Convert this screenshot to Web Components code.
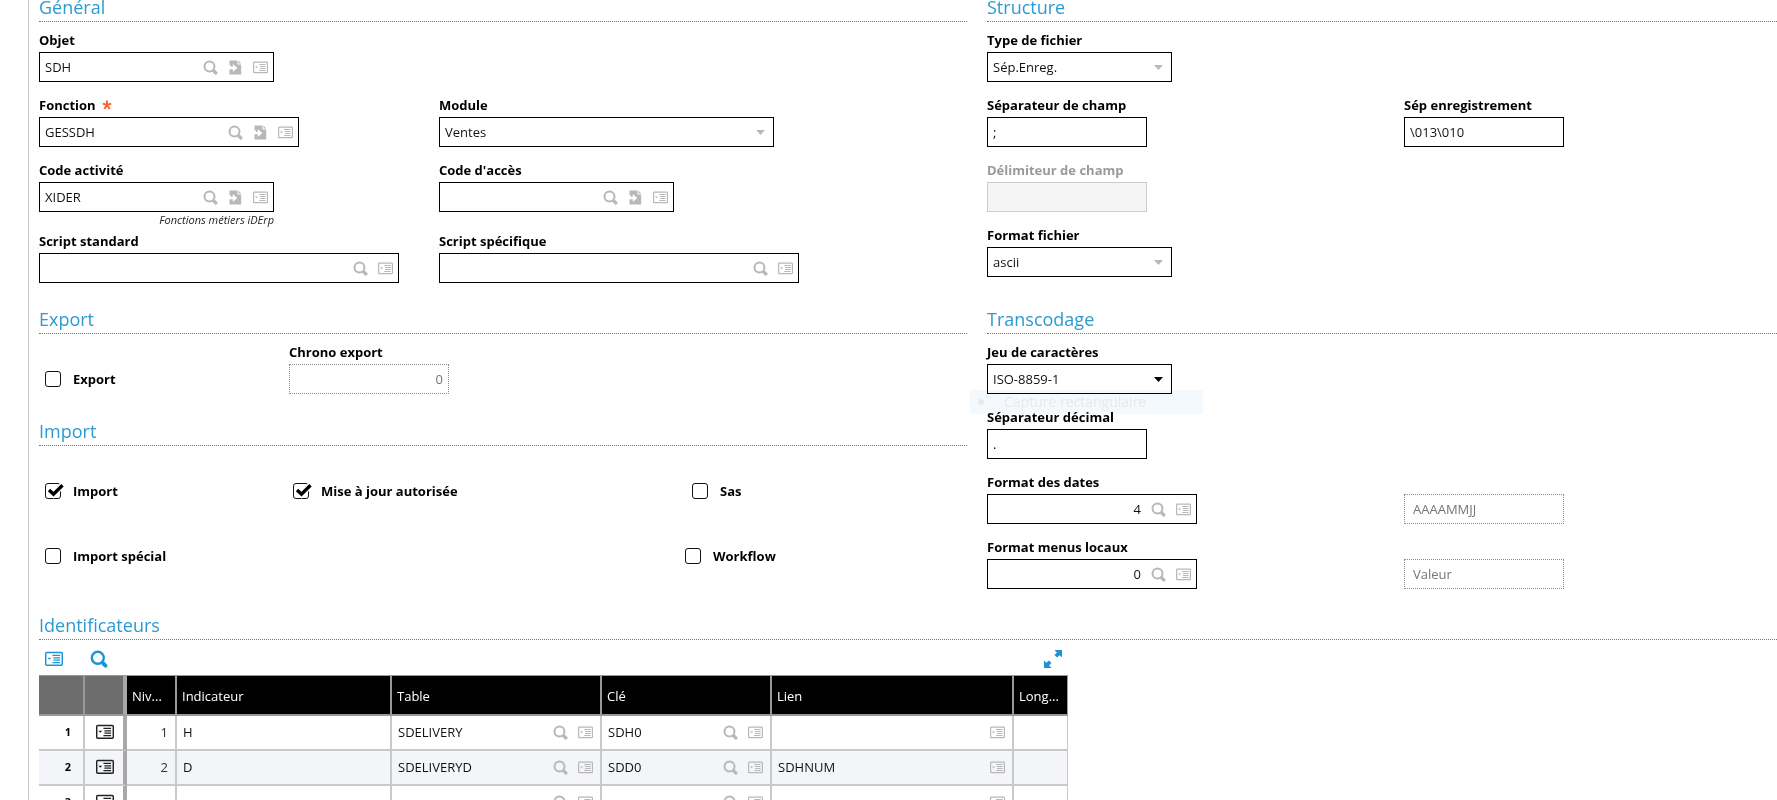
<!DOCTYPE html>
<html lang="fr">
<head>
<meta charset="utf-8">
<title>Modèles import/export</title>
<style>
  html, body { margin: 0; height: 100%; }
  body { background: #fff; color: #000; font: 13px/18px "Open Sans", "Noto Sans", sans-serif; overflow: hidden; }
  .columns { display: grid; grid-template-columns: minmax(0, 928fr) minmax(0, 790fr); gap: 29px 20px; }
  .stack { display: grid; gap: 30px; align-content: start; }
  .wide { grid-column: 1 / -1; }
  .pair { display: grid; grid-template-columns: 400fr 528fr; gap: 14px 0; align-items: start; }
  .pair.narrow { grid-template-columns: 417fr 373fr; align-items: end; }
  .export { display: grid; grid-template-columns: 250fr 678fr; }
  .rows { display: grid; gap: 14px; }
  .three { display: grid; grid-template-columns: 248fr 399fr 281fr; }
  .two { display: grid; grid-template-columns: 640fr 288fr; }
  .full { grid-column: 1 / -1; }
</style>
</head>
<body>
<x-page>
  <div class="columns">
    <x-section heading="Général">
      <div class="pair">
        <x-field class="full" label="Objet" value="SDH" size="235" icons="search jump list"></x-field>
        <x-field label="Fonction" required value="GESSDH" size="260" icons="search jump list"></x-field>
        <x-field label="Module" kind="select" value="Ventes" size="335"></x-field>
        <x-field label="Code activité" value="XIDER" size="235" icons="search jump list" hint="Fonctions métiers iDErp"></x-field>
        <x-field label="Code d'accès" size="235" icons="search jump list"></x-field>
        <x-field label="Script standard" size="360" icons="search list"></x-field>
        <x-field label="Script spécifique" size="360" icons="search list"></x-field>
      </div>
    </x-section>

    <x-section heading="Structure">
      <div class="pair narrow">
        <x-field class="full" label="Type de fichier" kind="select" value="Sép.Enreg." size="185"></x-field>
        <x-field label="Séparateur de champ" value=";" size="160"></x-field>
        <x-field label="Sép enregistrement" value="\013\010" size="160"></x-field>
        <x-field class="full" label="Délimiteur de champ" size="160" disabled></x-field>
        <x-field class="full" label="Format fichier" kind="select" value="ascii" size="185"></x-field>
      </div>
    </x-section>

    <div class="stack">
      <x-section heading="Export">
        <div class="export">
          <x-check label="Export"></x-check>
          <x-field label="Chrono export" value="0" size="160" numeric readonly></x-field>
        </div>
      </x-section>
      <x-section heading="Import">
        <div class="rows">
          <div class="three">
            <x-check label="Import" checked></x-check>
            <x-check label="Mise à jour autorisée" checked></x-check>
            <x-check label="Sas"></x-check>
          </div>
          <div class="two">
            <x-check label="Import spécial"></x-check>
            <x-check label="Workflow"></x-check>
          </div>
        </div>
      </x-section>
    </div>

    <x-section heading="Transcodage">
      <div class="pair narrow">
        <x-field class="full" label="Jeu de caractères" kind="select" value="ISO-8859-1" size="185" active></x-field>
        <x-field class="full" label="Séparateur décimal" value="." size="160"></x-field>
        <x-field label="Format des dates" value="4" size="210" numeric icons="search list"></x-field>
        <x-field name="Libellé du format des dates" value="AAAAMMJJ" size="160" readonly></x-field>
        <x-field label="Format menus locaux" value="0" size="210" numeric icons="search list"></x-field>
        <x-field name="Libellé du format des menus" value="Valeur" size="160" readonly></x-field>
      </div>
      <x-ghost slot="overlay">Capture rectangulaire</x-ghost>
    </x-section>

    <x-section class="wide" heading="Identificateurs">
      <x-grid></x-grid>
    </x-section>
  </div>
</x-page>

<script>
const define = (name, render) => customElements.define(name, class extends HTMLElement {
  connectedCallback() {
    if (this.shadowRoot) return;
    this.attachShadow({ mode: 'open' }).innerHTML = render(this);
  }
});

const SHAPES = {
  search: ['0 0 15 15', '<circle cx="6.5" cy="6.5" r="5" fill="none" stroke="currentColor" stroke-width="2"/><path d="M10.800 11L12.900 13" stroke="currentColor" stroke-width="3.200" stroke-linecap="round"/>'],
  jump: ['0 0 15 15', '<path fill="currentColor" fill-rule="evenodd" d="M1.500 .5H9.500V4.500H13.200V14.500H1.500V9.300H4.800V12L9.300 8L4.800 4V6.700H3V5.500H1.500Z"/><path fill="currentColor" d="M10.500 .5L13.200 3.500H10.500Z"/>'],
  list: ['0 0 15 15', '<rect x=".6" y="2.100" width="13.800" height="10.600" rx=".8" fill="none" stroke="currentColor" stroke-width="1.200"/><path fill="currentColor" d="M2 6.400H5.200L3.600 8.200Z"/><path d="M6.200 4.500H12.600M7 6.500H12.600M7 8.500H12.600M6.200 10.500H12.600" stroke="currentColor"/>'],
  expand: ['0 0 18 18', '<path fill="currentColor" d="M10.500 0H18V7.500L15.700 5.200L13 7.600L10.500 5L12.900 2.400ZM7.500 18H0V10.500L2.300 12.800L5 10.400L7.500 13L5.100 15.600Z"/>']
};
const NAMES = { search: 'Sélection', jump: 'Tunnel', list: 'Menu actions', expand: 'Plein écran' };

define('x-icon', el => {
  const [box, body] = SHAPES[el.getAttribute('shape')];
  return `<style>
    :host { display: block; width: var(--icon, 15px); height: var(--icon, 15px); }
    svg { display: block; width: 100%; height: 100%; }
  </style><svg viewBox="${box}" aria-hidden="true">${body}</svg>`;
});
const iconButton = shape => `<button type="button" aria-label="${NAMES[shape]}"><x-icon shape="${shape}"></x-icon></button>`;
const BUTTON = 'button { display: block; margin: 0; padding: 0; border: 0; background: none; color: inherit; cursor: pointer; }';

define('x-page', () => `<style>
  :host { display: block; box-sizing: border-box; height: 100%; margin-left: 28px; border-left: 1px solid #c8c8c8; padding-left: 10px; overflow: hidden; }
</style><main><slot></slot></main>`);

define('x-section', el => `<style>
  :host { display: block; position: relative; }
  h2 { margin: 0; padding-bottom: 7px; border-bottom: 1px dotted #1b93c0; color: #2c9ad2; font-weight: 400; font-size: 18px; line-height: 14px; }
  div { padding-top: 9px; }
</style><section><h2>${el.getAttribute('heading')}</h2><div><slot></slot></div><slot name="overlay"></slot></section>`);

define('x-field', el => {
  const get = n => el.getAttribute(n) || '', has = n => el.hasAttribute(n);
  const icons = get('icons').split(' ').filter(Boolean);
  const aria = get('name') ? `aria-label="${get('name')}"` : '';
  const control = get('kind') === 'select'
    ? `<select id="f"><option>${get('value')}</option></select><svg class="arrow" viewBox="0 0 9 5" aria-hidden="true"><path d="M0 0H9L4.500 5Z" fill="currentColor"/></svg>`
    : `<input id="f" type="text" ${aria} value="${get('value')}" ${has('disabled') ? 'disabled' : ''} ${has('readonly') ? 'readonly' : ''}>`;
  return `<style>
    :host { display: block; }
    label { display: flex; align-items: center; gap: 6px; height: 18px; margin-bottom: 3px; font-weight: 700; white-space: nowrap; }
    label svg { width: 10px; height: 10px; color: #ff6224; }
    .box { position: relative; box-sizing: border-box; display: flex; align-items: center; gap: 10px; width: ${get('size')}px; max-width: 100%; height: 30px; border: 1px solid #000; background: #fff; padding: 0 5px; color: #b8b8b8; }
    input, select { flex: 1; min-width: 0; width: 100%; box-sizing: border-box; height: 28px; margin: 0; padding: 0; border: 0; outline: 0; background: none; color: #111; font: inherit; appearance: none; }
    select { padding: 0 20px 0 0; }
    .arrow { position: absolute; right: 8px; width: 9px; height: 5px; pointer-events: none; }
    :host([active]) .box { color: #000; }
    :host([numeric]) input { text-align: right; }
    :host([readonly]) .box { border: 1px dotted #8c8c8c; }
    :host([readonly]) input { color: #757575; }
    :host([readonly]:not([numeric])) .box { padding: 0 8px; }
    :host([disabled]) label { color: #9a9a9a; }
    :host([disabled]) .box { border-color: #ccc; background: #f5f5f5; }
    p { width: ${get('size')}px; max-width: 100%; margin: 0 0 -10px; text-align: right; font-style: italic; font-size: 11px; line-height: 16px; color: #222; }
    ${BUTTON}
  </style>
  ${get('label') ? `<label for="f">${get('label')}${has('required') ? '<svg viewBox="0 0 10 10" aria-hidden="true"><path d="M5 5V.5M5 5L.8 3.600M5 5L9.200 3.600M5 5L2.300 9M5 5L7.700 9" stroke="currentColor" stroke-width="1.900"/></svg>' : ''}</label>` : ''}
  <div class="box">${control}${icons.map(iconButton).join('')}</div>
  ${get('hint') ? `<p>${get('hint')}</p>` : ''}`;
});

define('x-check', el => `<style>
  :host { display: flex; align-items: flex-end; min-height: 51px; }
  label { display: flex; align-items: center; gap: 12px; height: 30px; padding-left: 6px; font-weight: 700; white-space: nowrap; }
  .mark { position: relative; width: 16px; height: 16px; }
  input { display: block; box-sizing: border-box; width: 16px; height: 16px; margin: 0; appearance: none; border: 1px solid #111; border-radius: 3px; background: #fff; }
  svg { position: absolute; left: 0; top: 0; width: 19px; height: 16px; pointer-events: none; visibility: hidden; }
  input:checked + svg { visibility: visible; }
</style><label for="c"><span class="mark"><input id="c" type="checkbox" ${el.hasAttribute('checked') ? 'checked' : ''}><svg viewBox="0 0 19 16" aria-hidden="true"><path d="M4 7.500L8.500 11.500L17.500 2" fill="none" stroke="#fff" stroke-width="6"/><path d="M4 7L8.500 11.200L17.500 2.200" fill="none" stroke="#000" stroke-width="3.400"/></svg></span>${el.getAttribute('label')}</label>`);

define('x-ghost', () => `<style>
  :host { position: absolute; left: -17px; top: 78px; box-sizing: border-box; display: flex; align-items: center; width: 233px; height: 24px; padding-left: 8px; gap: 20px; background: #f4f9fe; color: #ebe8e6; font-size: 14px; white-space: nowrap; mix-blend-mode: multiply; pointer-events: none; }
  i { width: 6px; height: 6px; border-radius: 50%; background: #ece8de; }
</style><i></i><slot></slot>`);

define('x-grid', () => {
  const rows = [
    ['1', '1', 'H', 'SDELIVERY', 'SDH0', ''],
    ['2', '2', 'D', 'SDELIVERYD', 'SDD0', 'SDHNUM'],
    ['3', '', '', '', '', '']
  ];
  const cell = (text, ...icons) => `<td><div class="cell"><span>${text}</span>${icons.map(iconButton).join('')}</div></td>`;
  return `<style>
    :host { display: block; max-width: 1029px; margin-top: -9px; }
    .bar { display: flex; align-items: center; gap: 27px; height: 35px; padding: 2px 6px 0; box-sizing: border-box; color: #1c93d4; --icon: 18px; }
    .bar button:last-child { margin-left: auto; }
    table { width: 100%; table-layout: fixed; border-collapse: separate; border-spacing: 0; }
    th, td { box-sizing: border-box; padding: 0; border: 0 solid #c9c9c9; border-width: 0 2px 2px 0; text-align: left; overflow: hidden; white-space: nowrap; }
    thead th { height: 41px; padding: 1px 0 0 5px; background: #000; color: #fff; border-color: #999; border-top-width: 1px; font-weight: 400; }
    thead th:nth-child(-n+2) { background: #6d6d6d; }
    tr > :nth-child(2) { border-right: 4px solid #a8a8a8; }
    tr > :last-child { border-right-width: 1px; }
    td, tbody th { height: 35px; padding-bottom: 1px; }
    tbody tr:nth-child(even) { background: #f3f5f8; }
    tbody th { padding-right: 12px; text-align: right; font-size: 11px; font-weight: 700; }
    .menu { padding-left: 2px; color: #222; }
    .menu button { margin: 0 auto; --icon: 18px; }
    .level { padding-right: 7px; text-align: right; color: #333; }
    .cell { display: flex; align-items: center; gap: 10px; padding: 0 7px 0 6px; color: #b8b8b8; }
    .cell span { flex: 1; color: #111; }
    ${BUTTON}
  </style>
  <div class="bar">${iconButton('list')}${iconButton('search')}${iconButton('expand')}</div>
  <table>
    <colgroup>${[46, 42, 50, 215, 210, 170, 242, 54].map(w => `<col style="width:${w}px">`).join('')}</colgroup>
    <thead><tr><th></th><th></th>${['Niv...', 'Indicateur', 'Table', 'Clé', 'Lien', 'Long...'].map(t => `<th scope="col">${t}</th>`).join('')}</tr></thead>
    <tbody>${rows.map(([n, level, ind, table, key, link]) => `<tr><th scope="row">${n}</th><td class="menu">${iconButton('list')}</td><td class="level">${level}</td>${cell(ind)}${cell(table, 'search', 'list')}${cell(key, 'search', 'list')}${cell(link, 'list')}<td></td></tr>`).join('')}</tbody>
  </table>`;
});
</script>
</body>
</html>
